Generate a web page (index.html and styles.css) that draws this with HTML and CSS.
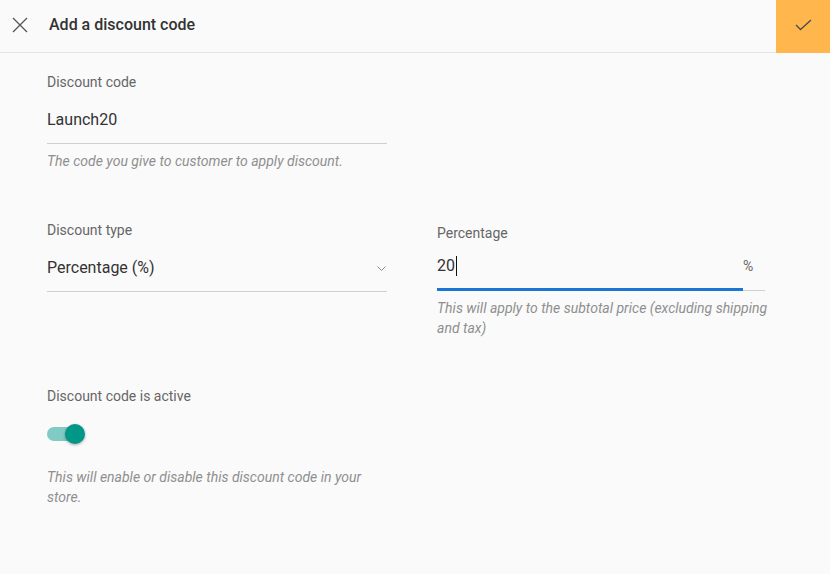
FILE: index.html
```html
<!DOCTYPE html>
<html lang="en">
<head>
<meta charset="utf-8">
<title>Add a discount code</title>
<link rel="stylesheet" href="styles.css">
</head>
<body>
<header class="topbar">
  <button class="close" aria-label="Close">
    <svg width="16" height="16" viewBox="0 0 16 16"><path d="M1 1 L15 15 M15 1 L1 15" stroke="#555" stroke-width="1.3" fill="none"/></svg>
  </button>
  <h1 class="title">Add a discount code</h1>
  <button class="confirm" aria-label="Save">
    <svg width="17" height="12" viewBox="0 0 17 12"><path d="M1 6 L5.5 10.5 L16 1" stroke="#4a4a4a" stroke-width="1.3" fill="none"/></svg>
  </button>
</header>
<main class="form">
  <div class="field">
    <div class="label">Discount code</div>
    <div class="input">Launch20</div>
    <div class="hint">The code you give to customer to apply discount.</div>
  </div>
  <div class="row">
    <div class="field">
      <div class="label">Discount type</div>
      <div class="input select">
        <span>Percentage (%)</span>
        <svg class="chev" width="9" height="5" viewBox="0 0 9 5"><path d="M0.5 0.5 L4.5 4.5 L8.5 0.5" stroke="#8a8a8a" stroke-width="1" fill="none"/></svg>
      </div>
    </div>
    <div class="field field-pct">
      <div class="label">Percentage</div>
      <div class="pct-wrap">
        <div class="pct-input"><span>20</span><span class="caret"></span></div>
        <div class="pct-suffix">%</div>
      </div>
      <div class="hint">This will apply to the subtotal price (excluding shipping and tax)</div>
    </div>
  </div>
  <div class="field field-active">
    <div class="label">Discount code is active</div>
    <div class="switch">
      <span class="track"></span>
      <span class="knob"></span>
    </div>
    <div class="hint hint-switch">This will enable or disable this discount code in your store.</div>
  </div>
</main>
</body>
</html>
```
FILE: styles.css
```css
* { box-sizing: border-box; }
html, body {
  margin: 0;
  padding: 0;
  background: #fafafa;
  font-family: Roboto, "Liberation Sans", sans-serif;
  color: #212121;
}
.topbar {
  display: flex;
  align-items: center;
  height: 53px;
  border-bottom: 1px solid #e4e4e4;
}
.close {
  width: 39px;
  height: 52px;
  border: 0;
  background: transparent;
  padding: 0 0 0 12px;
  display: flex;
  align-items: center;
  justify-content: flex-start;
}
.close svg { margin-top: -2px; }
.title {
  margin: 0 0 0 10px;
  font-size: 16px;
  font-weight: 500;
  color: #333;
  flex: 1;
  line-height: 20px;
  margin-top: -3px;
}
.confirm {
  width: 54px;
  height: 53px;
  margin-bottom: -1px;
  align-self: flex-start;
  border: 0;
  background: #ffb74d;
  display: flex;
  align-items: center;
  justify-content: center;
  padding: 0 0 4px 0;
}
.form {
  padding: 19px 0 0 47px;
}
.field { width: 340px; }
.label {
  font-size: 14px;
  line-height: 20px;
  color: #666;
}
.input {
  font-size: 16px;
  line-height: 20px;
  padding: 18px 0 13px;
  border-bottom: 1px solid #cfcfcf;
  color: #333;
}
.select {
  display: flex;
  justify-content: space-between;
  align-items: center;
}
.chev { margin-right: 1px; margin-top: 1px; }
.hint {
  margin-top: 7px;
  font-size: 14px;
  font-style: italic;
  line-height: 20px;
  color: #8f8f8f;
}
.row {
  display: flex;
  gap: 50px;
  margin-top: 49px;
}
.field-pct { margin-top: 3px; }
.pct-wrap {
  display: flex;
  align-items: flex-end;
  width: 328px;
}
.pct-input {
  flex: 1;
  display: flex;
  align-items: center;
  font-size: 16px;
  line-height: 20px;
  padding: 13px 0 12px;
  border-bottom: 3px solid #1976d2;
  color: #333;
}
.caret {
  display: inline-block;
  width: 1px;
  height: 20px;
  background: #111;
  margin-left: 1px;
}
.pct-suffix {
  width: 22px;
  font-size: 14px;
  line-height: 20px;
  color: #666;
  padding: 0 0 14px;
  border-bottom: 1px solid #d0d0d0;
}
.field-active { margin-top: 48px; }
.switch {
  position: relative;
  width: 38px;
  height: 20px;
  margin-top: 18px;
  display: flex;
  align-items: center;
}
.track {
  display: block;
  width: 34px;
  height: 14px;
  border-radius: 7px;
  background: #80cbc4;
}
.knob {
  position: absolute;
  left: 18px;
  top: 0;
  width: 20px;
  height: 20px;
  border-radius: 50%;
  background: #009688;
  box-shadow: 0 1px 3px rgba(0,0,0,0.35);
}
.hint-switch { margin-top: 23px; }
```
